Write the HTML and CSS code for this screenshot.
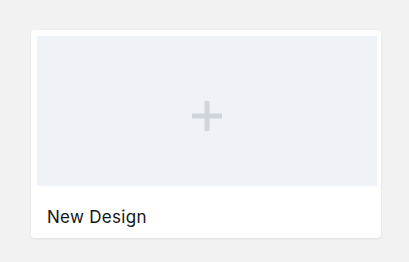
FILE: index.html
```html
<!DOCTYPE html>
<html>
<head>
<meta charset="utf-8">
<link rel="stylesheet" href="styles.css">
</head>
<body>
<div class="page">
  <div class="card">
    <div class="thumb">
      <svg class="plus" width="30" height="30" viewBox="0 0 30 30">
        <rect x="12.5" y="0" width="5" height="30" fill="#d0d5db"/>
        <rect x="0" y="12.5" width="30" height="5" fill="#d0d5db"/>
      </svg>
    </div>
    <div class="label">New Design</div>
  </div>
</div>
</body>
</html>
```

FILE: styles.css
```css
html, body {
  margin: 0;
  padding: 0;
  background: #f2f2f2;
}
.page {
  padding: 30px 31px;
}
.card {
  width: 350px;
  height: 208px;
  box-sizing: border-box;
  padding: 6px;
  background: #ffffff;
  border-radius: 4px;
  box-shadow: 0 1px 3px rgba(0, 0, 0, 0.08);
  display: flex;
  flex-direction: column;
}
.thumb {
  width: 340px;
  height: 150px;
  background: #eff3f7;
  display: flex;
  align-items: center;
  justify-content: center;
}
.plus {
  display: block;
  margin-top: 10px;
}
.label {
  padding: 21px 10px 0;
  font-family: Inter, "Noto Sans", sans-serif;
  font-size: 17px;
  line-height: 20px;
  letter-spacing: 0.3px;
  color: #151515;
}
```
